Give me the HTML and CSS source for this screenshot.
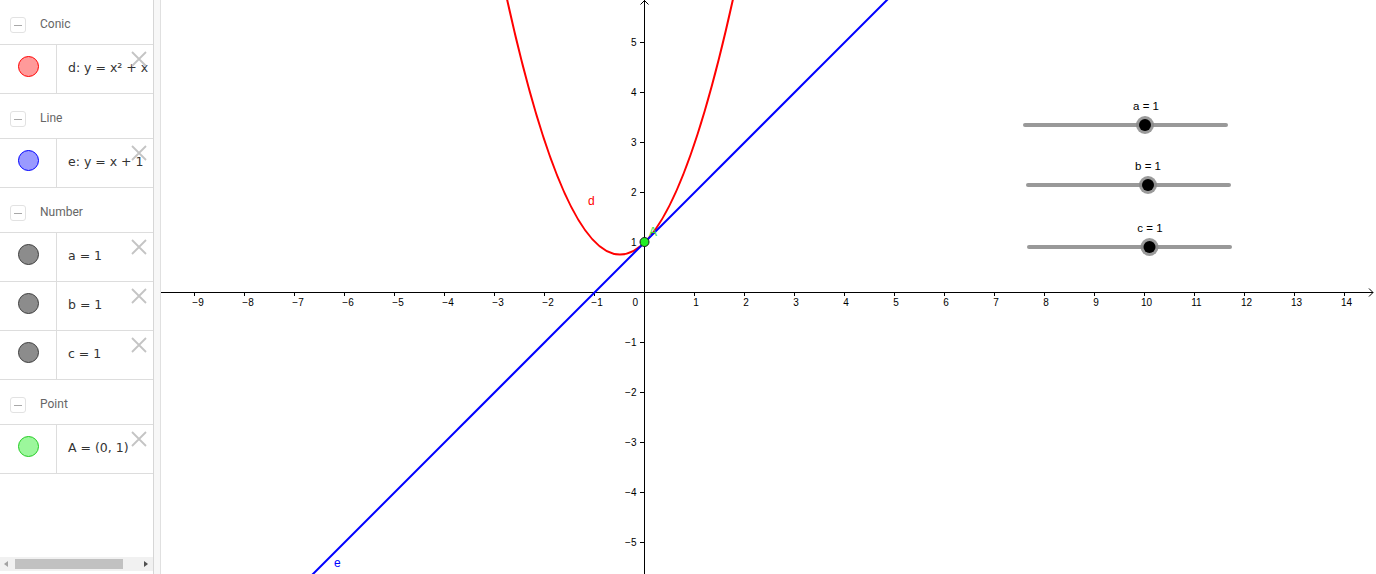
FILE: index.html
```html
<!DOCTYPE html>
<html>
<head>
<meta charset="utf-8">
<link rel="stylesheet" href="styles.css">
</head>
<body>
<div class="app">
  <aside class="algebra">
    <div class="list">
      <div class="ghead"><span class="toggle"></span><span class="gname">Conic</span></div>
      <div class="item">
        <div class="marker"><span class="dot red"></span></div>
        <div class="expr">d: y = x² + x</div>
        <svg class="del" viewBox="0 0 16 16"><path d="M1 1L15 15M15 1L1 15"/></svg>
      </div>
      <div class="ghead"><span class="toggle"></span><span class="gname">Line</span></div>
      <div class="item">
        <div class="marker"><span class="dot blue"></span></div>
        <div class="expr">e: y = x + 1</div>
        <svg class="del" viewBox="0 0 16 16"><path d="M1 1L15 15M15 1L1 15"/></svg>
      </div>
      <div class="ghead"><span class="toggle"></span><span class="gname">Number</span></div>
      <div class="item">
        <div class="marker"><span class="dot gray"></span></div>
        <div class="expr">a = 1</div>
        <svg class="del" viewBox="0 0 16 16"><path d="M1 1L15 15M15 1L1 15"/></svg>
      </div>
      <div class="item">
        <div class="marker"><span class="dot gray"></span></div>
        <div class="expr">b = 1</div>
        <svg class="del" viewBox="0 0 16 16"><path d="M1 1L15 15M15 1L1 15"/></svg>
      </div>
      <div class="item">
        <div class="marker"><span class="dot gray"></span></div>
        <div class="expr">c = 1</div>
        <svg class="del" viewBox="0 0 16 16"><path d="M1 1L15 15M15 1L1 15"/></svg>
      </div>
      <div class="ghead"><span class="toggle"></span><span class="gname">Point</span></div>
      <div class="item">
        <div class="marker"><span class="dot green"></span></div>
        <div class="expr">A = (0, 1)</div>
        <svg class="del" viewBox="0 0 16 16"><path d="M1 1L15 15M15 1L1 15"/></svg>
      </div>
    </div>
    <div class="hscroll">
      <div class="sarrow"><span class="tri-left"></span></div>
      <div class="thumb"></div>
      <div class="strack"></div>
      <div class="sarrow"><span class="tri-right"></span></div>
    </div>
  </aside>
  <div class="divider"></div>
  <svg class="graphics" width="1215" height="574" viewBox="161 0 1215 574">
    <g class="axes">
      <path d="M161 292.5H1373M644.5 0V574"/>
      <path d="M1369 288.5L1373 292.5L1369 296.5M640.5 4.5L644.5 0.5L648.5 4.5"/>
      <path d="M194.5 292v4M244.5 292v4M294.5 292v4M344.5 292v4M394.5 292v4M444.5 292v4M494.5 292v4M544.5 292v4M594.5 292v4M694.5 292v4M744.5 292v4M794.5 292v4M844.5 292v4M894.5 292v4M944.5 292v4M994.5 292v4M1044.5 292v4M1094.5 292v4M1144.5 292v4M1194.5 292v4M1244.5 292v4M1294.5 292v4M1344.5 292v4"/>
      <path d="M640 42.5h4M640 92.5h4M640 142.5h4M640 192.5h4M640 242.5h4M640 342.5h4M640 392.5h4M640 442.5h4M640 492.5h4M640 542.5h4"/>
    </g>
    <g class="xlabels">
      <text x="198" y="306">−9</text>
      <text x="248" y="306">−8</text>
      <text x="298" y="306">−7</text>
      <text x="348" y="306">−6</text>
      <text x="398" y="306">−5</text>
      <text x="448" y="306">−4</text>
      <text x="498" y="306">−3</text>
      <text x="548" y="306">−2</text>
      <text x="597" y="306">−1</text>
      <text x="696" y="306">1</text>
      <text x="746" y="306">2</text>
      <text x="796" y="306">3</text>
      <text x="846" y="306">4</text>
      <text x="896" y="306">5</text>
      <text x="946" y="306">6</text>
      <text x="996" y="306">7</text>
      <text x="1046" y="306">8</text>
      <text x="1096" y="306">9</text>
      <text x="1146.5" y="306">10</text>
      <text x="1196.5" y="306">11</text>
      <text x="1246.5" y="306">12</text>
      <text x="1296.5" y="306">13</text>
      <text x="1346.5" y="306">14</text>
    </g>
    <g class="ylabels">
      <text x="638" y="306">0</text>
      <text x="636.5" y="46">5</text>
      <text x="636.5" y="96">4</text>
      <text x="636.5" y="146">3</text>
      <text x="636.5" y="196">2</text>
      <text x="636.5" y="246">1</text>
      <text x="636.5" y="346">−1</text>
      <text x="636.5" y="396">−2</text>
      <text x="636.5" y="446">−3</text>
      <text x="636.5" y="496">−4</text>
      <text x="636.5" y="546">−5</text>
    </g>
    <path class="conic" d="M505.44 -8Q620 517 734.56 -8"/>
    <path class="line" d="M897 -10L303 584"/>
    <text class="lbl-d" x="588" y="205">d</text>
    <text class="lbl-e" x="334" y="567">e</text>
    <text class="lbl-a" x="649" y="235.5">A</text>
    <circle class="pt" cx="644.5" cy="242" r="4.5"/>
    <g class="slider">
      <text x="1146" y="110">a = 1</text>
      <path d="M1025 125H1226"/>
      <circle class="halo" cx="1145" cy="125" r="9"/>
      <circle class="knob" cx="1145" cy="125" r="6"/>
    </g>
    <g class="slider">
      <text x="1148" y="170">b = 1</text>
      <path d="M1028 185H1229"/>
      <circle class="halo" cx="1148" cy="185" r="9"/>
      <circle class="knob" cx="1148" cy="185" r="6"/>
    </g>
    <g class="slider">
      <text x="1150" y="231.5">c = 1</text>
      <path d="M1029 247H1230"/>
      <circle class="halo" cx="1149.5" cy="247" r="9"/>
      <circle class="knob" cx="1149.5" cy="247" r="6"/>
    </g>
  </svg>
</div>
</body>
</html>
```
FILE: styles.css
```css
html, body {
  margin: 0;
  padding: 0;
  background: #ffffff;
  overflow: hidden;
}

.app {
  display: flex;
  width: 1376px;
  height: 574px;
}

.algebra {
  width: 153px;
  flex: 0 0 153px;
  border-right: 1px solid #d6d6d6;
  display: flex;
  flex-direction: column;
  overflow: hidden;
  background: #ffffff;
}

.list {
  flex: 1;
  min-height: 0;
}

.ghead {
  height: 45px;
  box-sizing: border-box;
  border-bottom: 1px solid #dddddd;
  display: flex;
  align-items: flex-start;
  padding: 17px 0 0 10px;
}

.toggle {
  width: 16px;
  height: 16px;
  box-sizing: border-box;
  border: 1px solid #e2e2e2;
  border-radius: 3px;
  display: flex;
  align-items: center;
  justify-content: center;
}

.toggle::before {
  content: "";
  width: 8px;
  height: 1px;
  background: #a8a8a8;
}

.gname {
  margin-left: 14px;
  margin-top: -1px;
  font-family: Roboto, "Noto Sans", sans-serif;
  font-size: 12px;
  line-height: 16px;
  color: #666666;
}

.item {
  height: 49px;
  box-sizing: border-box;
  border-bottom: 1px solid #dddddd;
  display: flex;
  position: relative;
}

.marker {
  width: 56px;
  flex: 0 0 56px;
  border-right: 1px solid #dddddd;
  display: flex;
  justify-content: center;
  align-items: flex-start;
  padding-top: 11px;
}

.dot {
  width: 21px;
  height: 21px;
  box-sizing: border-box;
  border-radius: 50%;
  border: 1px solid #444;
}

.dot.red { background: #ff9a9a; border-color: #ff0000; }
.dot.blue { background: #9a9aff; border-color: #0000ff; }
.dot.gray { background: #8c8c8c; border-color: #3c3c3c; }
.dot.green { background: #9cf79c; border-color: #22cc22; }

.expr {
  padding: 13px 0 0 11px;
  font-family: "DejaVu Sans", sans-serif;
  font-size: 12.5px;
  line-height: 20px;
  color: #333333;
  white-space: nowrap;
}

.del {
  position: absolute;
  left: 131px;
  top: 6px;
  width: 16px;
  height: 16px;
  fill: none;
  stroke: #c4c4c4;
  stroke-width: 1.8;
}

.hscroll {
  height: 14px;
  margin-bottom: 3px;
  background: #f1f1f1;
  display: flex;
  align-items: center;
}

.sarrow {
  width: 15px;
  flex: 0 0 15px;
  height: 14px;
  display: flex;
  align-items: center;
  justify-content: center;
}

.tri-left {
  width: 0;
  height: 0;
  border-top: 3px solid transparent;
  border-bottom: 3px solid transparent;
  border-right: 4px solid #a3a3a3;
  margin-right: 3px;
}

.tri-right {
  width: 0;
  height: 0;
  border-top: 3px solid transparent;
  border-bottom: 3px solid transparent;
  border-left: 4px solid #505050;
}

.thumb {
  width: 108px;
  flex: 0 0 108px;
  height: 10px;
  background: #c1c1c1;
}

.strack {
  flex: 1;
}

.divider {
  width: 6px;
  flex: 0 0 6px;
  background: #f7f7f7;
  border-right: 1px solid #e0e0e0;
}

.graphics {
  display: block;
  flex: 0 0 1215px;
  overflow: hidden;
}

.axes path {
  fill: none;
  stroke: #000000;
  stroke-width: 1;
}

.xlabels text,
.ylabels text {
  font-family: "Liberation Sans", Arial, sans-serif;
  font-size: 10px;
  fill: #000000;
}

.xlabels text { text-anchor: middle; }
.ylabels text { text-anchor: end; }

.conic {
  fill: none;
  stroke: #ff0000;
  stroke-width: 2;
}

.line {
  fill: none;
  stroke: #0000ff;
  stroke-width: 2;
}

.lbl-d, .lbl-e, .lbl-a {
  font-family: "Liberation Sans", Arial, sans-serif;
  font-size: 12px;
}

.lbl-d { fill: #ff0000; }
.lbl-e { fill: #0000ff; }
.lbl-a { fill: #33dd33; }

.pt {
  fill: #22ee22;
  stroke: #1a1a1a;
  stroke-width: 1;
}

.slider text {
  font-family: "Liberation Sans", Arial, sans-serif;
  font-size: 11.5px;
  fill: #000000;
  text-anchor: middle;
}

.slider path {
  fill: none;
  stroke: #999999;
  stroke-width: 4;
  stroke-linecap: round;
}

.halo {
  fill: #888888;
  opacity: 0.85;
}

.knob {
  fill: #000000;
}
```
